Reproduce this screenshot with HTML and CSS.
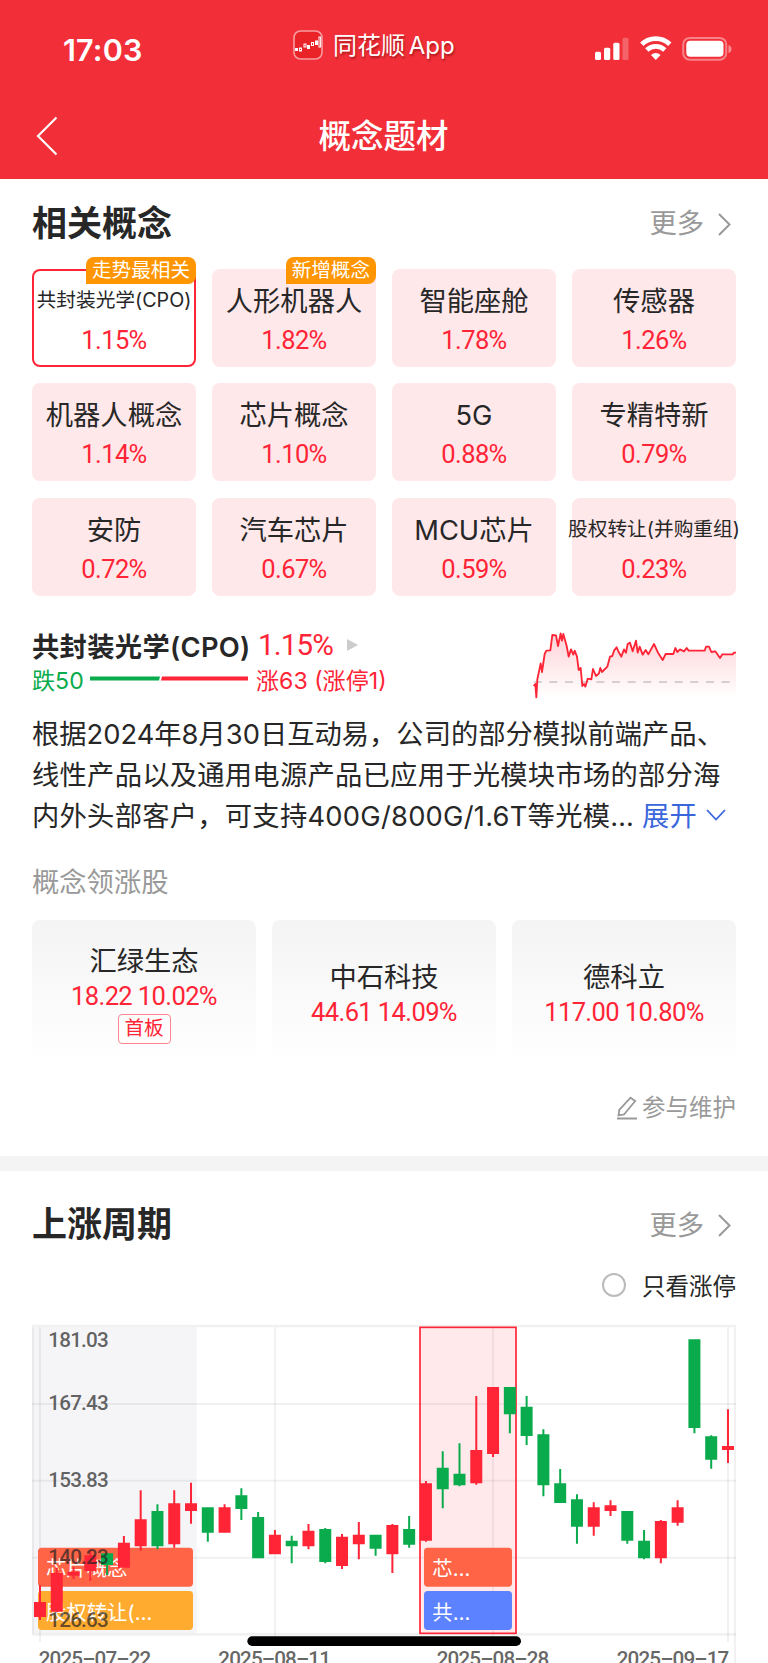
FILE: index.html
```html
<!DOCTYPE html>
<html lang="zh-CN">
<head>
<meta charset="utf-8">
<meta name="viewport" content="width=device-width">
<title>概念题材</title>
<link rel="stylesheet" href="styles.css">
</head>
<body>
<header class="top">
  <div class="status">
    <span class="clock">17:03</span>
    <span class="source">
      <svg class="applogo" viewBox="0 0 30 30"><rect x="1" y="1" width="28" height="28" rx="6.5" fill="#ea2329" stroke="#f79da0" stroke-width="1.6"/><g fill="none" stroke="#fff" stroke-width="1"><rect x="6.500" y="18" width="2" height="3"/><rect x="11" y="14" width="2" height="3"/><rect x="18.500" y="12.500" width="2" height="3"/><rect x="26" y="7" width="1.600" height="10"/></g><g fill="#fff"><rect x="2" y="18" width="3" height="3"/><rect x="14" y="15" width="3" height="4"/><rect x="22" y="10.500" width="3" height="4.500"/></g></svg>
      <span>同花顺 App</span>
    </span>
    <svg class="sys" viewBox="0 0 138 26">
      <g fill="#fff"><rect x="0" y="16.700" width="6" height="8.300" rx="1.500"/><rect x="9" y="12.700" width="6.200" height="12.300" rx="1.500"/><rect x="18.300" y="7.700" width="6.200" height="17.300" rx="1.500"/><rect x="27.500" y="2.700" width="6" height="22.300" rx="1.500" opacity=".25"/></g>
      <g fill="none" stroke="#fff" stroke-width="4.800"><path d="M46.800 9.300a20 20 0 0 1 28 0"/><path d="M51.800 15a13 13 0 0 1 18 0"/></g>
      <path d="M60.800 25l-4.800-5a7 7 0 0 1 9.600 0z" fill="#fff"/>
      <rect x="88.200" y="2.900" width="43" height="21.800" rx="6.500" fill="none" stroke="#fff" stroke-opacity=".4" stroke-width="2"/>
      <rect x="91.300" y="5.800" width="37.200" height="16" rx="4" fill="#fff"/><path d="M133.500 10q3 1 3 4t-3 4z" fill="#fff" opacity=".45"/>
    </svg>
  </div>
  <nav class="navbar">
    <svg class="back" viewBox="0 0 22 40"><path d="M20.500 1.500L2 20l18.500 18.500" fill="none" stroke="#fff" stroke-width="2.200"/></svg>
    <h1>概念题材</h1>
  </nav>
</header>

<main>
<section class="concepts">
  <div class="head"><h2>相关概念</h2><a class="more">更多<svg viewBox="0 0 13 23"><path d="M1 1l10.500 10.500L1 22"/></svg></a></div>
  <div class="grid">
    <div class="cell on"><b class="tag">走势最相关</b><span class="name small">共封装光学(CPO)</span><span class="num">1.15%</span></div>
    <div class="cell"><b class="tag">新增概念</b><span class="name">人形机器人</span><span class="num">1.82%</span></div>
    <div class="cell"><span class="name">智能座舱</span><span class="num">1.78%</span></div>
    <div class="cell"><span class="name">传感器</span><span class="num">1.26%</span></div>
    <div class="cell"><span class="name">机器人概念</span><span class="num">1.14%</span></div>
    <div class="cell"><span class="name">芯片概念</span><span class="num">1.10%</span></div>
    <div class="cell"><span class="name">5G</span><span class="num">0.88%</span></div>
    <div class="cell"><span class="name">专精特新</span><span class="num">0.79%</span></div>
    <div class="cell"><span class="name">安防</span><span class="num">0.72%</span></div>
    <div class="cell"><span class="name">汽车芯片</span><span class="num">0.67%</span></div>
    <div class="cell"><span class="name">MCU芯片</span><span class="num">0.59%</span></div>
    <div class="cell"><span class="name small">股权转让(并购重组)</span><span class="num">0.23%</span></div>
  </div>

  <div class="detail">
    <div>
      <div class="dtitle"><strong>共封装光学(CPO)</strong><span class="dnum">1.15%</span><svg viewBox="0 0 11 12"><path d="M0 0l11 6L0 12z" fill="#ccc"/></svg></div>
      <div class="ratio"><span class="fall">跌50</span><svg viewBox="0 0 158 5"><path d="M0 0.500h70l-1 4H0z" fill="#0aab4c"/><path d="M72 .5h86v4H71z" fill="#ff2436"/></svg><span class="rise">涨63 (涨停1)</span></div>
    </div>
    <svg class="spark" viewBox="96 54 612 216">
      <defs><linearGradient id="fade" x1="0" y1="0" x2="0" y2="1"><stop offset="0" stop-color="#ff2436" stop-opacity=".2"/><stop offset="1" stop-color="#ff2436" stop-opacity="0"/></linearGradient></defs>
      <path fill="url(#fade)" d="M101 228L106 222L109 264L112 208L122 160L126 186L134 132L139 122L151 121L157 75L168 76L174 108L182 70L186 92L190 72L200 108L206 140L213 118L220 134L224 122L231 140L236 180L242 174L247 228L252 222L256 230L263 206L274 208L279 177L288 198L297 190L301 174L306 186L322 170L330 140L337 138L342 122L350 112L356 126L364 140L372 118L378 128L383 102L390 98L398 124L408 92L413 128L419 110L428 134L437 120L445 133L451 122L462 102L474 128L488 150L497 132H520L526 114L532 126L540 118L552 124L560 114L566 122H614L618 110H627L634 126L646 124L660 144L667 133H698L702 128H708V264H101Z"/>
      <path d="M101 216H690" stroke="#aaa" stroke-width="3" stroke-dasharray="24 23"/>
      <path fill="none" stroke="#ff2436" stroke-width="5.500" stroke-linejoin="round" d="M101 228L106 222L109 262L112 208L122 160L126 186L134 132L139 122L151 121L157 75L168 76L174 108L182 70L186 92L190 72L200 108L206 140L213 118L220 134L224 122L231 140L236 180L242 174L247 228L252 222L256 230L263 206L274 208L279 177L288 198L297 190L301 174L306 186L322 170L330 140L337 138L342 122L350 112L356 126L364 140L372 118L378 128L383 102L390 98L398 124L408 92L413 128L419 110L428 134L437 120L445 133L451 122L462 102L474 128L488 150L497 132H520L526 114L532 126L540 118L552 124L560 114L566 122H614L618 110H627L634 126L646 124L660 144L667 133H698L702 128H708"/>
    </svg>
  </div>
  <p class="desc"><span>根据2024年8月30日互动易，公司的部分模拟前端产品、</span><span class="wide">线性产品以及通用电源产品已应用于光模块市场的部分海</span><span class="wide">内外头部客户，可支持400G/800G/1.6T等光模… <a>展开<svg viewBox="0 0 20 12"><path d="M1 1l9 9.500L19 1"/></svg></a></span></p>
  <h3>概念领涨股</h3>
  <div class="leaders">
    <div class="stock"><span class="name">汇绿生态</span><span class="num">18.22 10.02%</span><em>首板</em></div>
    <div class="stock"><span class="name">中石科技</span><span class="num">44.61 14.09%</span></div>
    <div class="stock"><span class="name">德科立</span><span class="num">117.00 10.80%</span></div>
  </div>
  <div class="edit"><svg viewBox="0 0 22 24"><path d="M1 22.500h20M14.500 1.700l4.700 3.300L8 18.500l-5.500 1 .8-5.500z"/></svg>参与维护</div>
</section>

<section class="cycle">
  <div class="head"><h2>上涨周期</h2><a class="more">更多<svg viewBox="0 0 13 23"><path d="M1 1l10.500 10.500L1 22"/></svg></a></div>
  <label class="only"><i></i>只看涨停</label>
  <svg class="chart" viewBox="0 0 2304 1059">
    <rect x="97" y="52" width="493" height="918" fill="#f5f5f8"/>
    <g stroke="#000" stroke-opacity=".055" stroke-width="6" fill="none">
      <path stroke-width="8" d="M96 48H2208"/><path d="M96 282H2208M96 512H2208M96 743H2208"/><path stroke-width="8" d="M96 973H2208"/>
      <path d="M99 52V970M120 52V995M825 52V978M1479 52V978M2184 52V995M2205 52V1059"/>
    </g>
    <rect x="1260" y="52" width="288" height="918" fill="#ff2436" fill-opacity=".1" stroke="#ff2436" stroke-width="5"/>
    <g class="bands">
      <rect x="114" y="713" width="465" height="117" rx="11" fill="#ff6446"/><text x="138" y="799">芯片概念</text>
      <rect x="114" y="843" width="465" height="117" rx="11" fill="#ffab30"/><text x="138" y="929">股权转让(…</text>
      <rect x="1272" y="713" width="264" height="117" rx="11" fill="#ff6446"/><text x="1297" y="799">芯…</text>
      <rect x="1272" y="843" width="264" height="117" rx="11" fill="#5d82ff"/><text x="1297" y="929">共…</text>
    </g>
    <g id="candles"></g>
    <g class="axis">
      <text x="145" y="111" textLength="181">181.03</text><text x="145" y="300" textLength="181">167.43</text><text x="145" y="531" textLength="181">153.83</text><text x="145" y="762" textLength="181">140.23</text><text x="145" y="950" textLength="181">126.63</text>
      <text x="116" y="1069" textLength="338">2025–07–22</text><text x="655" y="1069" textLength="338">2025–08–11</text><text x="1310" y="1069" textLength="338">2025–08–28</text><text x="1850" y="1069" textLength="338">2025–09–17</text>
    </g>
    <rect x="742" y="979" width="821" height="29" rx="14.500" fill="#000"/>
  </svg>
</section>
</main>
<script src="chart.js"></script>
</body>
</html>
```
FILE: styles.css
```css
* { box-sizing: border-box; }
body { margin: 0; width: 768px; height: 1663px; overflow: hidden; background: #fff; color: #272727; font-family: Inter, "Noto Sans CJK SC", sans-serif; font-size: 27.3px; }
h1, h2, h3, p { margin: 0; }
svg { display: block; flex: none; }
.top { height: 179px; background: #f22f38; color: #fff; }
.status { height: 94px; display: grid; grid-template-columns: 293px 1fr 173px; align-items: center; }
.clock { padding: 4px 0 0 63px; font-size: 30.500px; font-weight: 600; letter-spacing: .2px; }
.source { display: flex; align-items: center; gap: 10px; font-size: 24px; line-height: 30px; padding-bottom: 4px; text-shadow: 1px 2px 2px rgba(90,0,0,.45); white-space: nowrap; }
.source span { word-spacing: -3px; padding-top: 1px; }
.applogo { width: 30px; height: 30px; }
.sys { width: 138px; height: 26px; margin-top: 2px; }
.navbar { height: 85px; position: relative; display: flex; align-items: center; justify-content: center; }
.back { position: absolute; left: 36px; top: 22px; width: 22px; height: 40px; }
.navbar h1 { font-size: 32.500px; line-height: 40px; font-weight: 500; padding: 1px 1px 0 0; }
.concepts { height: 977px; padding: 0 32px; }
.head { height: 90px; display: flex; align-items: center; justify-content: space-between; }
.head h2 { font-size: 35px; line-height: 50px; font-weight: 600; padding-bottom: 2px; }
.more { display: flex; align-items: center; gap: 14px; color: #999; font-size: 27.300px; line-height: 36px; padding-right: 5px; }
.more svg { width: 13px; height: 23px; fill: none; stroke: #999; stroke-width: 2; }
.grid { display: grid; grid-template-columns: repeat(4, 164px); gap: 16.300px 16px; }
.cell { position: relative; height: 98px; padding-top: 13px; border-radius: 8px; background: #ffe8ea; display: flex; flex-direction: column; align-items: center; white-space: nowrap; }
.cell.on { background: #fff; box-shadow: inset 0 0 0 2px #ff2436; }
.name { height: 40px; line-height: 40px; font-size: 27.300px; }
.name.small { font-size: 19.700px; line-height: 36px; }
.num { height: 38px; line-height: 37px; font-family: Roboto, sans-serif; font-size: 25.500px; letter-spacing: -.6px; color: #ff2436; }
.tag { position: absolute; right: 0; top: -12px; height: 27.300px; padding: 0 6px; border-radius: 8px 8px 8px 0; background: #ff9500; color: #fff; font-weight: 400; font-size: 19.600px; line-height: 26px; }
.detail { height: 98px; margin-top: 20px; padding-top: 12px; display: flex; justify-content: space-between; }
.dtitle { display: flex; align-items: center; height: 35px; }
.dtitle strong { font-weight: 600; width: 226px; white-space: nowrap; letter-spacing: .300px; }
.dnum { width: 89px; font-family: Roboto, sans-serif; font-size: 29.500px; letter-spacing: -.8px; color: #ff2436; }
.dtitle svg { width: 11px; height: 12px; }
.ratio { display: flex; align-items: center; height: 32px; font-size: 23.100px; white-space: nowrap; }
.ratio svg { width: 158px; height: 5px; }
.fall { color: #0aab4c; width: 58px; }
.rise { color: #ff2436; margin-left: 8px; }
.spark { width: 204px; height: 72px; }
.desc { height: 124px; line-height: 41.300px; }
.desc span { display: block; white-space: nowrap; }
.desc .wide { letter-spacing: .250px; }
.desc a { color: #3a66dc; }
.desc svg { display: inline-block; width: 20px; height: 12px; margin-left: 9px; vertical-align: 5px; fill: none; stroke: #3a66dc; stroke-width: 1.800; }
h3 { font-size: 27.300px; line-height: 40px; margin: 25px 0 17px; font-weight: 400; color: #999; }
.leaders { display: grid; grid-template-columns: repeat(3, 224px); gap: 16px; }
.stock { height: 148px; border-radius: 8px; background: linear-gradient(#f4f4f4, #fff 144px); display: flex; flex-direction: column; align-items: center; justify-content: center; }
.stock .name { height: 36px; line-height: 36px; }
.stock .num { height: 32px; line-height: 32px; }
.stock em { margin-top: 2px; width: 53px; height: 30px; border: 1.500px solid #ff8590; border-radius: 4px; font-style: normal; font-size: 19.600px; line-height: 26px; text-align: center; color: #ff2436; }
.edit { margin-top: 22px; display: flex; justify-content: flex-end; align-items: center; gap: 4px; height: 36px; font-size: 23.500px; line-height: 36px; color: #999; }
.edit svg { width: 22px; height: 24px; fill: none; stroke: #999; stroke-width: 1.800; }
.cycle { border-top: 15px solid #f4f4f4; }
.cycle .head { height: 108px; padding: 0 32px; }
.cycle .more { padding-top: 1px; }
.only { display: flex; justify-content: flex-end; align-items: center; gap: 16px; height: 31px; margin-top: -10px; padding-right: 32px; font-size: 23.500px; }
.only i { width: 24px; height: 24px; border: 2px solid #bbb; border-radius: 50%; }
.chart { width: 768px; height: 353px; margin-top: 10px; }
.bands text { font-size: 61px; fill: #fff; }
.axis text { font-family: Roboto, sans-serif; font-size: 62px; font-weight: 500; fill: #222; fill-opacity: .7; }
```
FILE: chart.js
```js
// Each row: direction, wick top, body top, body bottom, wick bottom.
const rows = [
  ['r',825,876,921,930],['r',773,789,905,907],['r',772,785,797,807],['r',722,736,783,812],
  ['g',730,730,765,795],['r',678,698,773,773],['r',541,628,709,722],['g',583,603,709,718],
  ['r',541,580,703,713],['r',518,580,603,641],['g',592,592,668,695],['r',583,592,668,668],
  ['g',535,556,597,630],['g',606,621,745,745],['r',660,674,733,733],['g',677,692,709,760],
  ['r',642,662,709,718],['g',654,657,756,760],['r',672,680,768,777],['r',636,674,703,748],
  ['g',674,674,716,737],['r',642,645,733,789],['g',618,657,704,713],['r',513,520,692,695],
  ['g',424,473,538,595],['g',400,491,526,529],['r',258,420,520,524],['r',231,231,432,441],
  ['g',231,231,313,370],['g',258,290,378,405],['g',358,373,526,559],['g',477,520,579,579],
  ['g',553,568,650,701],['r',577,592,650,677],['r',571,586,603,618],['g',603,603,692,701],
  ['g',660,692,745,748],['r',630,633,745,760],['r',571,592,638,647],['g',88,88,354,370],
  ['g',376,379,449,476],['r',298,408,420,459]
];
const fill = { r: '#ff2436', g: '#0aab4c' };
document.getElementById('candles').innerHTML = rows.map(([c, top, open, close, low], i) => {
  const x = 120 + i * 50.34;
  return `<path fill="${fill[c]}" d="M${x - 3} ${top}h6V${low}h-6zM${x - 18} ${open}h36V${close}h-36z"/>`;
}).join('');
```
